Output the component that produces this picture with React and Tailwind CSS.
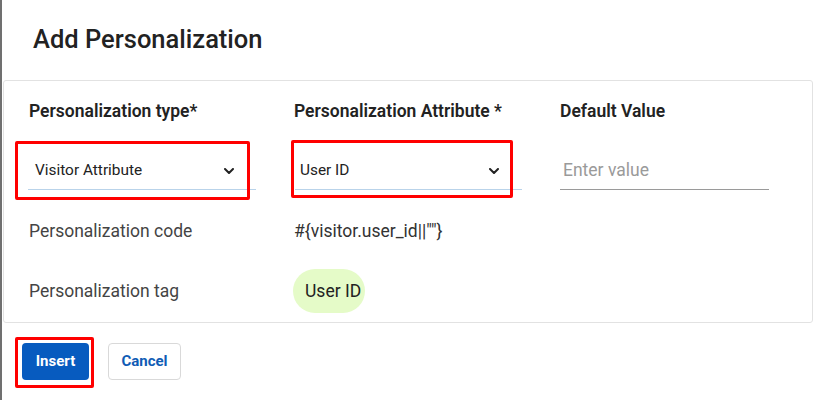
import React from "react";

const Chevron = () => (
  <svg width="10" height="6" viewBox="0 0 10 6" className="shrink-0">
    <polyline points="1,1 5,5 9,1" fill="none" stroke="#222" strokeWidth="2" strokeLinecap="round" strokeLinejoin="round" />
  </svg>
);

export default function App() {
  return (
    <div className="flex w-[814px] h-[400px] bg-white overflow-hidden" style={{ fontFamily: "Roboto, 'Liberation Sans', sans-serif" }}>
      <div className="w-[2px] bg-[#707070] shrink-0" />
      <div className="flex-1 flex flex-col">
        <div className="h-[80px] pl-[31px] flex items-center">
          <h2 className="text-[25.5px] font-medium text-[#222] leading-none">Add Personalization</h2>
        </div>
        <div className="ml-[1px] mr-[1px] h-[243px] border border-[#e2e2e2] rounded-[3px] pl-[25px] pt-[18px]">
          <div className="grid grid-cols-[265px_266px_1fr]">
            <div className="text-[17.5px] leading-[24px] font-semibold text-[#222]">Personalization type*</div>
            <div className="text-[17.5px] leading-[24px] font-semibold text-[#222]">Personalization Attribute *</div>
            <div className="text-[17.5px] leading-[24px] font-semibold text-[#222]">Default Value</div>

            <div className="mt-[29px]">
              <div className="relative -ml-px w-[228px] h-[38px] border-b border-[#b9d3ea] flex items-center justify-between pl-[7px] pr-[22px]">
                <span className="text-[15.4px] text-[#222]">Visitor Attribute</span>
                <Chevron />
                <div className="absolute left-[-13px] right-[6px] top-[-11px] bottom-[-11px] border-[3px] border-[#ff0000] rounded-[2px] pointer-events-none" />
              </div>
            </div>
            <div className="mt-[29px]">
              <div className="relative ml-px w-[227px] h-[38px] border-b border-[#b9d3ea] flex items-center justify-between pl-[5px] pr-[23px]">
                <span className="text-[15.4px] text-[#222]">User ID</span>
                <Chevron />
                <div className="absolute left-[-4px] right-[9px] top-[-12px] bottom-[-9px] border-[3px] border-[#ff0000] rounded-[2px] pointer-events-none" />
              </div>
            </div>
            <div className="mt-[29px]">
              <div className="w-[209px] h-[38px] border-b border-[#9a9a9a] flex items-center pl-[3px]">
                <span className="text-[17.5px] text-[#9a9a9a]">Enter value</span>
              </div>
            </div>

            <div className="mt-[29px] text-[17.5px] leading-[24px] text-[#444]">Personalization code</div>
            <div className="mt-[29px] text-[17.5px] leading-[24px] text-[#333] col-span-2">{'#{visitor.user_id||""}'}</div>

            <div className="mt-[26px] h-[44px] flex items-center text-[17.5px] text-[#444]">Personalization tag</div>
            <div className="mt-[26px] col-span-2">
              <span className="inline-flex items-center h-[44px] pl-[12px] pr-[4px] rounded-full bg-[#e5fbc8] text-[17.5px] text-[#222] -ml-px">User ID</span>
            </div>
          </div>
        </div>
        <div className="pt-[20px] pl-[20px] flex items-start gap-[19px]">
          <div className="relative">
            <button className="w-[67px] h-[37px] rounded-[4px] bg-[#075bbf] text-white text-[15px] font-bold">Insert</button>
            <div className="absolute left-[-7px] right-[-5px] top-[-6px] bottom-[-8px] border-[3px] border-[#ff0000] rounded-[2px] pointer-events-none" />
          </div>
          <button className="w-[73px] h-[37px] rounded-[4px] border border-[#d9d9d9] bg-white text-[#0f5cb5] text-[15px] font-bold">Cancel</button>
        </div>
      </div>
    </div>
  );
}
